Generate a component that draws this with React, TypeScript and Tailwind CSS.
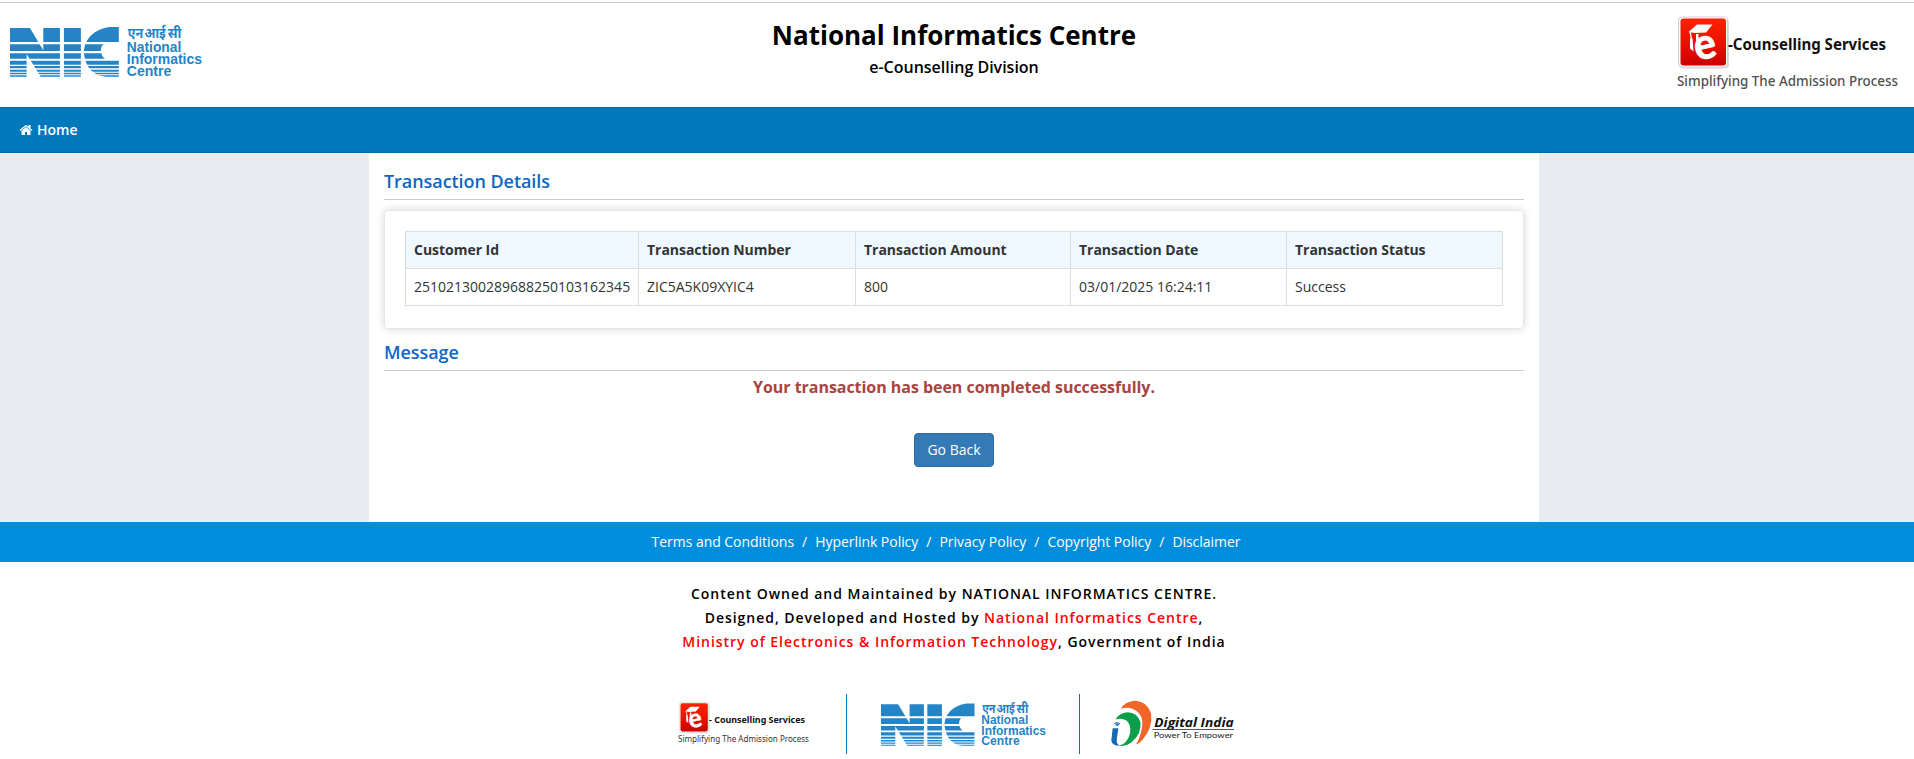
import React from "react";

const RED_LINK = "text-[#ff0000]";

function HomeIcon() {
  return (
    <svg viewBox="0 0 1792 1792" className="size-[14px] fill-white" aria-hidden="true">
      <path d="M1472 992v480q0 26-19 45t-45 19h-384v-384h-256v384h-384q-26 0-45-19t-19-45v-480q0-1 .5-3t.5-3l575-474 575 474q1 2 1 6zm223-69l-62 74q-8 9-21 11h-3q-13 0-21-7l-692-577-692 577q-12 8-24 7-13-2-21-11l-62-74q-8-10-7-23.500t11-21.500l719-599q32-26 76-26t76 26l244 204v-195q0-14 9-23t23-9h192q14 0 23 9t9 23v408l219 182q10 8 11 21.500t-7 23.500z" />
    </svg>
  );
}

function NicLogo({ className }: { className: string }) {
  return (
    <svg viewBox="30 70 577 165" preserveAspectRatio="none" className={`overflow-visible ${className}`} role="img">
      <g fill="#2484c6">
        <path d="M30 85H90L130 152V85H180V231H122L80 163V231H30Z" />
        <path d="M192 85H243V231H192Z" />
        <path d="M357 82V132H313Q303 138 303 152Q304 170 317 179H357V231H318Q284 228 267 204Q252 182 252 152Q256 118 285 98Q310 83 330 82Z" />
      </g>
      <g fill="#fff">
        <path d="M28 127H360V134H28ZM28 154H360V161H28ZM28 177H360V183H28ZM28 195H360V199H28ZM28 206H360V210H28ZM28 216H360V219.500H28ZM28 224H360V227H28Z" />
      </g>
      <g fill="#2484c6" fontWeight="700">
        <g className="font-['Noto_Sans','Noto_Sans_Devanagari',sans-serif]" fontSize="45">
          <text x="384" y="114" textLength="46" lengthAdjust="spacingAndGlyphs">एन</text>
          <text x="434" y="114" textLength="64" lengthAdjust="spacingAndGlyphs">आई</text>
          <text x="504" y="114" textLength="41" lengthAdjust="spacingAndGlyphs">सी</text>
        </g>
        <g className="font-['Liberation_Sans',sans-serif]" fontSize="42">
          <text x="381" y="156" textLength="164" lengthAdjust="spacingAndGlyphs">National</text>
          <text x="381" y="192.500" textLength="226" lengthAdjust="spacingAndGlyphs">Informatics</text>
          <text x="381" y="229.500" textLength="134" lengthAdjust="spacingAndGlyphs">Centre</text>
        </g>
      </g>
    </svg>
  );
}

function CapTile({ id }: { id: string }) {
  return (
    <g>
      <defs>
        <linearGradient id={id} x1="0" y1="0" x2="0" y2="1">
          <stop offset="0" stopColor="#ff2200" />
          <stop offset="0.5" stopColor="#f01000" />
          <stop offset="1" stopColor="#c80000" />
        </linearGradient>
      </defs>
      <rect x="2" y="2" width="49" height="50" rx="4" fill="#dcdcdc" />
      <rect x="0.500" y="0.500" width="49" height="50" rx="4" fill="#fff" stroke="#cfcfcf" />
      <rect x="2.500" y="2" width="45.500" height="47" rx="3" fill={`url(#${id})`} />
      <text x="16.500" y="42" fontSize="43" fontWeight="700" fill="#fff" stroke="#fff" strokeWidth="0.800" textLength="22" lengthAdjust="spacingAndGlyphs" transform="rotate(-12 28 32)" className="font-['Lato',sans-serif]">e</text>
      <path d="M10.500 15.500L19 8H34.500L28 16L16.500 16.500Z" fill="#fff" />
      <path d="M18 17.500H20.500V22L18 25Z" fill="#fff" />
      <path d="M12 15L13.500 23" stroke="#fff" strokeWidth="1.300" fill="none" />
      <path d="M12 22L14.500 22L15.500 35L12 32Z" fill="#fff" />
    </g>
  );
}

function CounsellingLogo() {
  return (
    <svg viewBox="0 0 224 80" className="h-20 w-[224px] overflow-visible" role="img">
      <g transform="translate(2 0.5)">
        <CapTile id="tile-header" />
      </g>
      <g className="font-['Noto_Sans',sans-serif]">
        <text x="52" y="34" fontSize="15.500" fontWeight="700" fill="#111" textLength="158" lengthAdjust="spacingAndGlyphs">-Counselling Services</text>
        <text x="1" y="69.500" fontSize="14" fontWeight="500" fill="#505050" textLength="221" lengthAdjust="spacingAndGlyphs">Simplifying The Admission Process</text>
      </g>
    </svg>
  );
}

function CounsellingLogoSmall() {
  return (
    <svg viewBox="0 0 132 48" className="h-12 w-[132px] overflow-visible" role="img">
      <g transform="translate(1 0) scale(0.6)">
        <CapTile id="tile-footer" />
      </g>
      <g className="font-['Noto_Sans',sans-serif]">
        <text x="31" y="21" fontSize="8.500" fontWeight="700" fill="#111" textLength="96" lengthAdjust="spacingAndGlyphs">- Counselling Services</text>
        <text x="0" y="40" fontSize="8" fill="#333" textLength="131" lengthAdjust="spacingAndGlyphs">Simplifying The Admission Process</text>
      </g>
    </svg>
  );
}

function DigitalIndiaLogo() {
  return (
    <svg viewBox="60 30 375 140" className="h-[47px] w-[125px]" role="img">
      <path d="M93 56Q103 35 133 32Q170 33 183 70Q190 110 158 149Q149 160 138 163Q158 128 157 95Q155 67 130 57Q112 49 93 56Z" fill="#f26529" />
      <path d="M77 88Q86 68 113 66Q141 67 151 95Q157 130 123 158Q107 170 88 167Q112 160 120 130Q125 101 108 90Q95 82 77 88Z" fill="#0b9f4a" />
      <path d="M68 114H85L80 150Q80 162 90 167Q66 167 64 151Z" fill="#1769b4" />
      <path d="M72 100Q81 92 91 100L82 108Z" fill="#1769b4" />
      <path d="M74 102Q82 97 89 102" stroke="#fff" strokeWidth="1.500" fill="none" />
      <text x="193" y="111" fontSize="37" fontWeight="700" fontStyle="italic" fill="#111" textLength="238" lengthAdjust="spacingAndGlyphs" className="font-['Open_Sans',sans-serif]">Digital India</text>
      <path d="M188 118H432" stroke="#333" strokeWidth="2.500" />
      <text x="191" y="143" fontSize="24" fill="#222" textLength="238" lengthAdjust="spacingAndGlyphs" className="font-['Lato',sans-serif]">Power To Empower</text>
    </svg>
  );
}

const columns = [
  { title: "Customer Id", value: "251021300289688250103162345", width: "w-[233px]" },
  { title: "Transaction Number", value: "ZIC5A5K09XYIC4", width: "w-[217px]" },
  { title: "Transaction Amount", value: "800", width: "w-[215px]" },
  { title: "Transaction Date", value: "03/01/2025 16:24:11", width: "w-[216px]" },
  { title: "Transaction Status", value: "Success", width: "w-[216px]" },
];

const policies = ["Terms and Conditions", "Hyperlink Policy", "Privacy Policy", "Copyright Policy", "Disclaimer"];

function SectionTitle({ children }: { children: React.ReactNode }) {
  return (
    <h2 className="border-b border-[#ccc] pb-2 text-[18px] leading-[20px] font-semibold tracking-[-0.06px] text-[#0d67c2]">{children}</h2>
  );
}

export default function App() {
  return (
    <div className="h-[759px] overflow-hidden bg-white font-['Open_Sans',sans-serif] text-[14px] leading-5 text-[#333]">
      <div className="h-[3px] border-b border-[#ccc]" />
      <header className="grid h-[104px] grid-cols-[1fr_auto_1fr] items-start pr-[14px] pl-[10px]">
        <div className="pt-5">
          <NicLogo className="h-[55px] w-[192px]" />
        </div>
        <div className="pt-[14px] pr-[2px] text-center text-black">
          <h1 className="text-[26px] leading-[36px] font-bold">National Informatics Centre</h1>
          <p className="pt-[3px] text-[16px] leading-[22px] font-semibold">e-Counselling Division</p>
        </div>
        <div className="flex justify-end pt-[13px]">
          <CounsellingLogo />
        </div>
      </header>

      <nav className="flex h-[46px] items-center gap-1 border-y border-[#0069a6] bg-[#0079bc] pl-[19px] font-semibold text-white">
        <HomeIcon />
        <span>Home</span>
      </nav>

      <main className="h-[369px] bg-[#e8ebf0]">
        <div className="mx-auto h-full w-[1170px] -translate-x-[3px] bg-white px-[15px] pt-[18px]">
          <SectionTitle>Transaction Details</SectionTitle>
          <section className="mt-[10px] h-[119px] rounded border border-[#e6e6e6] p-5 shadow-[0_0_8px_rgba(0,0,0,0.16)]">
            <table className="w-[1098px] table-fixed border-collapse border border-[#ddd]">
              <thead className="bg-[#eff7ff]">
                <tr className="h-[37px]">
                  {columns.map((c) => (
                    <th key={c.title} className={`border border-[#ddd] px-2 text-left font-bold tracking-[-0.03px] ${c.width}`}>{c.title}</th>
                  ))}
                </tr>
              </thead>
              <tbody>
                <tr className="h-[37px]">
                  {columns.map((c) => (
                    <td key={c.title} className="border border-[#ddd] px-2">{c.value}</td>
                  ))}
                </tr>
              </tbody>
            </table>
          </section>
          <div className="pt-[13px]">
            <SectionTitle>Message</SectionTitle>
          </div>
          <p className="pt-[5px] text-center text-[16px] leading-[22px] font-bold tracking-[-0.04px] text-[#a94442]">
            Your transaction has been completed successfully.
          </p>
          <div className="flex justify-center pt-[35px]">
            <button className="h-[34px] w-20 rounded border border-[#2e6da4] bg-[#337ab7] text-white">Go Back</button>
          </div>
        </div>
      </main>

      <footer>
        <div className="flex h-10 items-center justify-center bg-[#008ddb] pr-[22px] tracking-[-0.04px] text-white">
          {policies.map((p, i) => (
            <React.Fragment key={p}>
              {i > 0 && <span className="px-2">/</span>}
              <a>{p}</a>
            </React.Fragment>
          ))}
        </div>
        <div className="pt-5 pr-[6px] text-center leading-6 font-semibold tracking-[0.97px] text-black">
          <p>Content Owned and Maintained by NATIONAL INFORMATICS CENTRE.</p>
          <p>Designed, Developed and Hosted by <span className={RED_LINK}>National Informatics Centre</span>,</p>
          <p><span className={RED_LINK}>Ministry of Electronics &amp; Information Technology</span>, Government of India</p>
        </div>
        <div className="flex pt-10 pl-[678px]">
          <div className="h-[60px] w-[169px] border-r border-[#0079bc] pt-2">
            <CounsellingLogoSmall />
          </div>
          <div className="h-[60px] w-[233px] border-r border-[#0079bc] pt-[6px] pl-[34px]">
            <NicLogo className="h-[47px] w-[165px]" />
          </div>
          <div className="pt-[6px] pl-[30px]">
            <DigitalIndiaLogo />
          </div>
        </div>
      </footer>
    </div>
  );
}
